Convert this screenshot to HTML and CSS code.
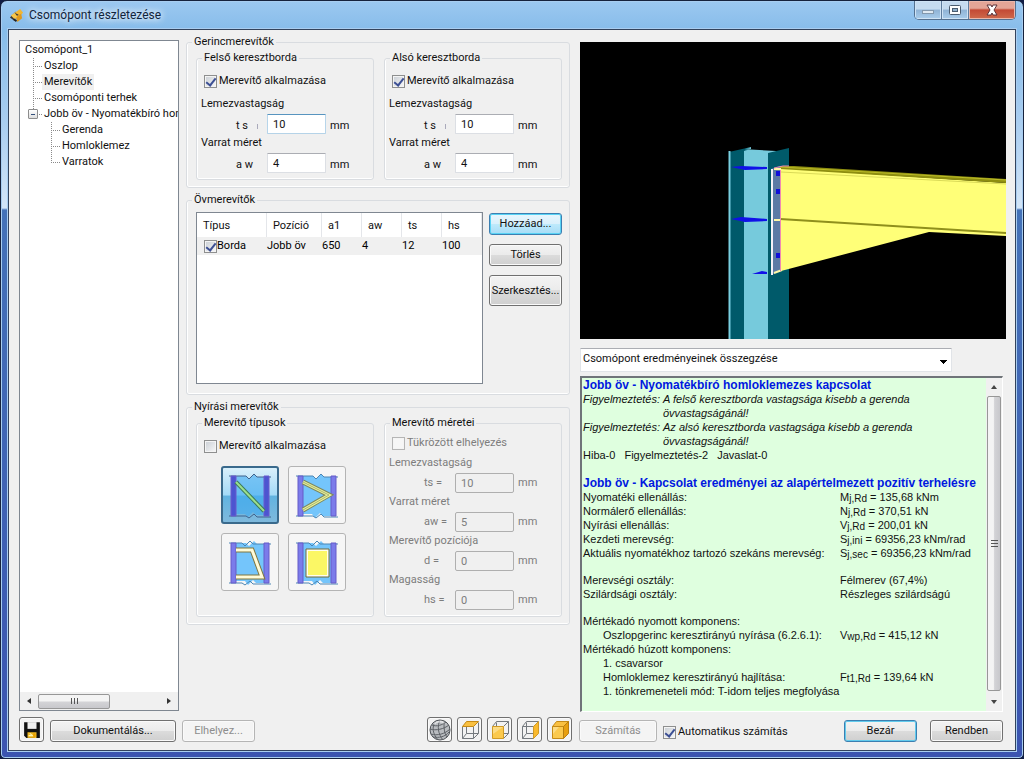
FILE: index.html
```html
<!DOCTYPE html>
<html lang="hu">
<head>
<meta charset="utf-8">
<title>Csomópont részletezése</title>
<link rel="stylesheet" href="styles.css">
</head>
<body>
<div class="window">
  <header class="titlebar">
    <svg class="app-icon" viewBox="0 0 16 16" aria-hidden="true">
      <path d="M1 10 7 4l4 2-6 7z" fill="#3b3733"/><path d="M6 5 12 1l3 4-3 3z" fill="#f2b632"/><path d="M7 9l6-3 1 5-5 4z" fill="#e0991c"/><path d="M2 8l4-3 3 4-3 3z" fill="#f7c64a"/><path d="M5 12l3 2" stroke="#222" stroke-width="2"/>
    </svg>
    <h1 class="title">Csomópont részletezése</h1>
    <div class="caption-buttons">
      <button class="caption" type="button" aria-label="Kis méret"><svg viewBox="0 0 14 12"><rect x="1.500" y="6.500" width="11" height="3" fill="#dfe9f2" stroke="#8398ad"/></svg></button>
      <button class="caption" type="button" aria-label="Teljes méret"><svg viewBox="0 0 14 12"><rect x="1.500" y="1.500" width="11" height="9" rx="1" fill="#fff" stroke="#4c5d70"/><rect x="4.500" y="4.500" width="5" height="3" fill="#8fb0cc" stroke="#4c5d70"/></svg></button>
      <button class="caption close" type="button" aria-label="Bezárás"><svg viewBox="0 0 14 12"><path d="M2 1h4l1 2 1-2h4L9 6l3 5H8L7 9l-1 2H2l3-5z" fill="#fff" stroke="#5c3238"/></svg></button>
    </div>
  </header>

  <main class="client">
    <div class="columns">
      <nav class="tree-panel" aria-label="Csomópont felépítése">
        <div class="tree">
          <span class="node">Csomópont_1</span>
          <ul class="branch">
            <li><div class="item"><i class="twig"></i><span class="node">Oszlop</span></div></li>
            <li><div class="item"><i class="twig"></i><span class="node selected">Merevítők</span></div></li>
            <li><div class="item"><i class="twig"></i><span class="node">Csomóponti terhek</span></div></li>
            <li>
              <div class="item"><i class="twig last"><button class="expander" type="button" aria-label="Összecsukás" aria-expanded="true"></button></i><span class="node">Jobb öv - Nyomatékbíró homloklemezes kapcsolat</span></div>
              <ul class="branch nested">
                <li><div class="item"><i class="twig"></i><span class="node">Gerenda</span></div></li>
                <li><div class="item"><i class="twig"></i><span class="node">Homloklemez</span></div></li>
                <li><div class="item"><i class="twig last"></i><span class="node">Varratok</span></div></li>
              </ul>
            </li>
          </ul>
        </div>
        <div class="hscroll" aria-hidden="true"><i class="arrow left"></i><span class="thumb"><i></i><i></i><i></i></span><i class="arrow right"></i></div>
      </nav>

      <div class="settings">
        <fieldset class="group">
          <legend>Gerincmerevítők</legend>
          <div class="pair">
            <fieldset class="group inner">
              <legend>Felső keresztborda</legend>
              <label class="check"><input type="checkbox" checked>Merevítő alkalmazása</label>
              <p class="caption-text">Lemezvastagság</p>
              <div class="field"><label for="f-ts">t s</label><i class="tick"></i><input class="active" id="f-ts" type="text" value="10"><span>mm</span></div>
              <p class="caption-text tight">Varrat méret</p>
              <div class="field"><label for="f-aw">a w</label><input id="f-aw" type="text" value="4"><span>mm</span></div>
            </fieldset>
            <fieldset class="group inner">
              <legend>Alsó keresztborda</legend>
              <label class="check"><input type="checkbox" checked>Merevítő alkalmazása</label>
              <p class="caption-text">Lemezvastagság</p>
              <div class="field"><label for="a-ts">t s</label><i class="tick"></i><input id="a-ts" type="text" value="10"><span>mm</span></div>
              <p class="caption-text tight">Varrat méret</p>
              <div class="field"><label for="a-aw">a w</label><input id="a-aw" type="text" value="4"><span>mm</span></div>
            </fieldset>
          </div>
        </fieldset>

        <fieldset class="group">
          <legend>Övmerevítők</legend>
          <div class="list-row">
            <div class="list">
              <table>
                <thead><tr><th class="c-type">Típus</th><th class="c-pos">Pozíció</th><th>a1</th><th>aw</th><th>ts</th><th>hs</th><th class="c-rest"></th></tr></thead>
                <tbody><tr><td><label class="check cell"><input type="checkbox" checked>Borda</label></td><td>Jobb öv</td><td>650</td><td>4</td><td>12</td><td>100</td><td></td></tr></tbody>
              </table>
            </div>
            <div class="list-buttons">
              <button class="btn hot" type="button">Hozzáad...</button>
              <button class="btn" type="button">Törlés</button>
              <button class="btn tall" type="button">Szerkesztés...</button>
            </div>
          </div>
        </fieldset>

        <fieldset class="group">
          <legend>Nyírási merevítők</legend>
          <div class="pair">
            <fieldset class="group inner">
              <legend>Merevítő típusok</legend>
              <label class="check">
                <input type="checkbox">Merevítő alkalmazása</label>
              <div class="types">
                <button class="type on" type="button" aria-label="Átlós merevítő" aria-pressed="true">
                  <svg viewBox="0 0 44 48"><path d="M5 5h13l3 3 5-5 3 3h10v38H28l-3-3-5 5-3-3H5z" fill="#3faaf0" opacity=".6"/><path d="M1 5h17l3 3 5-5 3 3h14M1 45h17l3 2 5-4 3 3h14" fill="none" stroke="#41638c"/><path d="M3 5h5v40H3zM36 5h5v40h-5z" fill="#4c55d0" stroke="#6a5acd"/><path d="M8 11l28 29" stroke="#3c7a58" stroke-width="4"/><path d="M8 11l28 29" stroke="#9be08e" stroke-width="2"/></svg>
                </button>
                <button class="type" type="button" aria-label="K merevítő">
                  <svg viewBox="0 0 44 48"><path d="M5 5h13l3 3 5-5 3 3h10v39H28l-3-3-5 5-3-4H5z" fill="#74c5fb"/><path d="M1 5h17l3 3 5-5 3 3h14M1 45h17l3 2 5-4 3 3h14" fill="none" stroke="#4c86b4"/><path d="M3 5h5v40H3zM36 5h5v40h-5z" fill="#7b7bea" stroke="#665cc8"/><path d="M8 11l26 13L8 39" fill="none" stroke="#7c8860" stroke-width="5"/><path d="M8 11l26 13L8 39" fill="none" stroke="#eaf29a" stroke-width="3"/><path d="M8 11l26 13L8 39" fill="none" stroke="#a9b474"/></svg>
                </button>
                <button class="type" type="button" aria-label="Trapéz merevítő">
                  <svg viewBox="0 0 44 48"><path d="M5 5h13l3 3 5-5 3 3h10v39H28l-3-3-5 5-3-4H5z" fill="#74c5fb"/><path d="M1 5h13l3 3 5-5 3 3h18M1 45h13l3 2 5-4 3 3h18" fill="none" stroke="#4c86b4"/><path d="M3 5h5v40H3zM36 5h5v40h-5z" fill="#7b7bea" stroke="#665cc8"/><path d="M8 12h16l10 27H8" fill="none" stroke="#80763f" stroke-width="5"/><path d="M8 12h16l10 27H8" fill="none" stroke="#fffbd8" stroke-width="3"/></svg>
                </button>
                <button class="type" type="button" aria-label="Lemezes merevítő">
                  <svg viewBox="0 0 44 48"><path d="M5 5h13l3 3 5-5 3 3h10v39H28l-3-3-5 5-3-4H5z" fill="#74c5fb"/><path d="M1 5h13l3 3 5-5 3 3h18M1 45h13l3 2 5-4 3 3h18" fill="none" stroke="#4c86b4"/><path d="M3 5h5v40H3zM36 5h5v40h-5z" fill="#7b7bea" stroke="#665cc8"/><path d="M11 11h23v28H11z" fill="#fffef0" stroke="#6f6a3c"/><path d="M13 13h19v24H13z" fill="#fbf765"/></svg>
                </button>
              </div>
            </fieldset>
            <fieldset class="group inner off" disabled>
              <legend>Merevítő méretei</legend>
              <label class="check"><input type="checkbox">Tükrözött elhelyezés</label>
              <p class="caption-text">Lemezvastagság</p>
              <div class="field"><label for="n-ts">ts =</label><input id="n-ts" type="text" value="10"><span>mm</span></div>
              <p class="caption-text">Varrat méret</p>
              <div class="field"><label for="n-aw">aw =</label><input id="n-aw" type="text" value="5"><span>mm</span></div>
              <p class="caption-text">Merevítő pozíciója</p>
              <div class="field"><label for="n-d">d =</label><input id="n-d" type="text" value="0"><span>mm</span></div>
              <p class="caption-text">Magasság</p>
              <div class="field"><label for="n-hs">hs =</label><input id="n-hs" type="text" value="0"><span>mm</span></div>
            </fieldset>
          </div>
        </fieldset>
      </div>

      <div class="output">
        <svg class="model" viewBox="580 42 426 297" preserveAspectRatio="xMaxYMid slice" role="img" aria-label="Oszlop-gerenda csomópont modellje">
          <rect x="380" y="-58" width="826" height="497"/>
          <defs><linearGradient id="web"><stop offset="0" stop-color="#00596a"/><stop offset=".7" stop-color="#005a6a"/><stop offset="1" stop-color="#78c9db"/></linearGradient></defs>
          <path d="M742 149l34 2v188h-34z" fill="#76cadc"/>
          <path d="M729 152l22-5v2l-7 2v188h-15z" fill="url(#web)"/>
          <path d="M729.500 151v188" stroke="#79cfe0" stroke-width="2"/>
          <path d="M768 153l21-5v191h-21z" fill="#005a6a"/>
          <path d="M731 167l10-1 26 1v2l-22 1zM731 219l10-2 26 2v2l-22 1zM752 274l10-3 5 1v2z" fill="#1010e8"/>
          <path d="M771 169l9-3h8l-7 4v99l-9 6z" fill="#5b7aa5"/>
          <path d="M772 169v106" stroke="#f4f1f8" stroke-width="2" fill="none"/>
          <path d="M776 171h4v5h-4zM776 189h4v5h-4zM776 253h4v5h-4z" fill="#1010d8"/>
          <path d="M781 168l225 15v53l-77-4-148 39z" fill="#ffff78"/>
          <path d="M780 166l14 0 212 13v4l-226-14z" fill="#8d8d10"/>
          <path d="M780 167l226 13" stroke="#bcbc28"/>
          <path d="M781 172l225 12" stroke="#dada58" fill="none"/>
          <path d="M780 219l226 14" stroke="#8f8f1c" stroke-width="2"/>
          <path d="M774 169h7M774 220h6M774 273l8-3" stroke="#fff8a8" stroke-width="2"/>
          <path d="M780.500 170v101M774 168l9-2h6" stroke="#f08ab0" fill="none"/>
        </svg>

        <div class="combo"><select aria-label="Eredmények nézete"><option>Csomópont eredményeinek összegzése</option></select></div>

        <section class="report" aria-label="Eredmények" tabindex="0">
          <div class="report-text">
            <h2>Jobb öv - Nyomatékbíró homloklemezes kapcsolat</h2>
            <div class="warning"><span>Figyelmeztetés:</span><span>A felső keresztborda vastagsága kisebb a gerenda övvastagságánál!</span></div>
            <div class="warning"><span>Figyelmeztetés:</span><span>Az alsó keresztborda vastagsága kisebb a gerenda övvastagságánál!</span></div>
            <div class="counts"><span>Hiba-0</span><span>Figyelmeztetés-2</span><span>Javaslat-0</span></div>
            <h2 class="spaced">Jobb öv - Kapcsolat eredményei az alapértelmezett pozitív terhelésre</h2>
            <table class="results">
              <tbody>
                <tr><th scope="row">Nyomatéki ellenállás:</th><td>M<sub>j,Rd</sub> = 135,68 kNm</td></tr>
                <tr><th scope="row">Normálerő ellenállás:</th><td>N<sub>j,Rd</sub> = 370,51 kN</td></tr>
                <tr><th scope="row">Nyírási ellenállás:</th><td>V<sub>j,Rd</sub> = 200,01 kN</td></tr>
                <tr><th scope="row">Kezdeti merevség:</th><td>S<sub>j,ini</sub> = 69356,23 kNm/rad</td></tr>
                <tr><th scope="row">Aktuális nyomatékhoz tartozó szekáns merevség:</th><td>S<sub>j,sec</sub> = 69356,23 kNm/rad</td></tr>
              </tbody>
              <tbody>
                <tr class="spaced"><th scope="row">Merevségi osztály:</th><td>Félmerev (67,4%)</td></tr>
                <tr><th scope="row">Szilárdsági osztály:</th><td>Részleges szilárdságú</td></tr>
              </tbody>
              <tbody>
                <tr class="spaced"><th scope="row">Mértékadó nyomott komponens:</th><td></td></tr>
                <tr class="sub"><th scope="row">Oszlopgerinc keresztirányú nyírása (6.2.6.1):</th><td>V<sub>wp,Rd</sub> = 415,12 kN</td></tr>
                <tr><th scope="row">Mértékadó húzott komponens:</th><td></td></tr>
                <tr class="sub"><th scope="row">1. csavarsor</th><td></td></tr>
                <tr class="sub"><th scope="row">Homloklemez keresztirányú hajlítása:</th><td>F<sub>t1,Rd</sub> = 139,64 kN</td></tr>
                <tr class="sub"><th scope="row">1. tönkremeneteli mód: T-idom teljes megfolyása</th><td></td></tr>
              </tbody>
            </table>
          </div>
          <div class="vscroll" aria-hidden="true"><i class="arrow up"></i><span class="thumb"><i></i><i></i><i></i></span><i class="arrow down"></i></div>
        </section>
      </div>
    </div>

    <footer class="actions">
      <div class="left-actions">
        <button class="btn icon" type="button" aria-label="Mentés"><svg viewBox="0 0 16 16"><path d="M1 1h14v14H3l-2-2z" fill="#111"/><path d="M4 1h8v6H4z" fill="#eee"/><path d="M4 10h8v5H4z" fill="#f0b820"/><path d="M6 11l5 4M5 13h3" stroke="#fff4b0"/><path d="M9 11h2v4H9z" fill="#e9a000"/></svg></button>
        <button class="btn document" type="button">Dokumentálás...</button>
        <button class="btn small" type="button" disabled>Elhelyez...</button>
      </div>
      <div class="views">
        <button class="btn icon" type="button" aria-label="Drótváz"><svg viewBox="0 0 22 22"><circle cx="11" cy="11" r="10" fill="#b9bcc0" stroke="#4e5257"/><path d="M7 2c-5 6-3 13 2 19M11 1c-3 6-2 14 3 20M15 2c0 7 0 12 3 16M1 10c6 2 14 0 19-4M2 15c6 2 14 0 19-5M4 18c6 1 12 0 16-5M3 6c5 2 10 0 14-3" fill="none" stroke="#5d6166"/><path d="M5 5c3-3 8-3 10-1" stroke="#fff" fill="none" stroke-width="2" opacity=".6"/></svg></button>
        <button class="btn icon" type="button" aria-label="Felülnézet"><svg viewBox="0 0 22 22"><path d="M3.500 7.500v12h11v-12M7.500 3.500v11h12v-11M3.500 19.500l4-5M14.500 19.500l5-5" fill="none" stroke="#74797e"/><path d="M3.500 7.500l4-5h12l-5 5z" fill="#f9c041" stroke="#c58a16"/></svg></button>
        <button class="btn icon" type="button" aria-label="Elölnézet"><svg viewBox="0 0 22 22"><path d="M3.500 7.500l4-5h12v12l-5 5M14.500 7.500l5-5M14.500 14.500h5M7.500 3.500v4" fill="none" stroke="#74797e"/><path d="M3.500 7.500h11v12h-11z" fill="#fbc94d" stroke="#d09a26"/><path d="M4 8h10L4 15z" fill="#fddc83"/></svg></button>
        <button class="btn icon" type="button" aria-label="Oldalnézet"><svg viewBox="0 0 22 22"><path d="M3.500 7.500h11v12h-11zM3.500 7.500l4-5h12M7.500 3.500v11h7M3.500 19.500l4-5" fill="none" stroke="#74797e"/><path d="M14.500 7.500l5-5v12l-5 5z" fill="#f9b92d" stroke="#d09a26"/></svg></button>
        <button class="btn icon" type="button" aria-label="Térbeli nézet"><svg viewBox="0 0 22 22"><path d="M3.500 7.500h11v12h-11z" fill="#fbc94d" stroke="#c58a16"/><path d="M3.500 7.500l4-5h12l-5 5z" fill="#f9c041" stroke="#c58a16"/><path d="M14.500 7.500l5-5v12l-5 5z" fill="#e79f10" stroke="#b87e10"/><path d="M4 8h6l-6 7z" fill="#fddc83"/></svg></button>
      </div>
      <div class="right-actions">
        <button class="btn calc" type="button" disabled>Számítás</button>
        <label class="check"><input type="checkbox" checked>Automatikus számítás</label>
        <button class="btn small default" type="button">Bezár</button>
        <button class="btn small" type="button">Rendben</button>
      </div>
    </footer>
  </main>
</div>
</body>
</html>
```

FILE: styles.css
```css
* { box-sizing: border-box; }

body {
  margin: 0;
  background: #101c44;
  color: #111;
  font: 11px/14px Roboto, "Noto Sans", sans-serif;
}

button, input, select { margin: 0; font: inherit; color: inherit; }

p, h1, h2, ul { margin: 0; padding: 0; }

/* Window frame */
.window {
  display: flex;
  flex-direction: column;
  min-height: 100vh;
  padding: 0 7px 7px;
  border: 1px solid #16223c;
  border-radius: 7px 7px 5px 5px;
  background: linear-gradient(to bottom, #9cc8f0 0, #86bcea 30px, #a9cdf0 120px, #d3e5f7 207px, #4472b8 209px, #3b54b0 100%);
  box-shadow: inset 0 0 0 1px #a8cdf0;
}

.titlebar {
  display: flex;
  align-items: center;
  height: 28px;
  padding-left: 1px;
}

.app-icon { width: 15px; height: 15px; }

.title {
  flex: 1;
  margin-left: 5px;
  color: #10243c;
  font: 12px/16px Roboto, "Noto Sans", sans-serif;
  text-shadow: 0 0 6px #fff, 0 0 8px #fff;
}

.caption-buttons {
  display: flex;
  align-self: flex-start;
  overflow: hidden;
  border: 1px solid #54708f;
  border-top: 0;
  border-radius: 0 0 5px 5px;
}

.caption {
  display: grid;
  place-items: center;
  width: 27px;
  height: 18px;
  padding: 0;
  border: 0;
  border-right: 1px solid #5f7d9e;
  background: linear-gradient(#c5dbf0 0 45%, #90b3d5 50%, #a9cdec);
  box-shadow: inset 0 0 0 1px #cfe3f5;
}

.caption svg { width: 14px; height: 12px; }

.caption.close {
  width: 46px;
  border-right: 0;
  background: linear-gradient(#e3a597 0 40%, #c34a35 50%, #cf6a4c);
  box-shadow: inset 0 0 0 1px #e9b6aa;
}

.client {
  display: flex;
  flex: 1;
  flex-direction: column;
  gap: 5px;
  padding: 5px 9px 8px 10px;
  border: 1px solid #33435c;
  outline: 1px solid #a9cdf0;
  background: #f0f0f0;
}

.columns {
  display: grid;
  flex: 1;
  grid-template-columns: 160px 384px minmax(0, 1fr);
  gap: 0 7px;
}

/* Tree */
.tree-panel {
  display: flex;
  flex-direction: column;
  margin-top: 5px;
  margin-bottom: 1px;
  border: 1px solid #7f8791;
  background: #fff;
}

.tree {
  flex: 1;
  padding: 1px 0 0 3px;
  overflow: hidden;
  line-height: 16px;
  white-space: nowrap;
}

.node { padding: 0 2px; }
.selected { background: #f0f0f0; }
.branch { padding-left: 5px; list-style: none; }
.nested { padding-left: 18px; }
.item { display: flex; }

.twig {
  display: flex;
  flex: 0 0 14px;
  align-items: center;
  height: 16px;
  background:
    repeating-linear-gradient(to bottom, #8a8a8a 0 1px, transparent 1px 2px) 5px 0 / 1px 16px no-repeat,
    repeating-linear-gradient(to right, #8a8a8a 0 1px, transparent 1px 2px) 5px 8px / 9px 1px no-repeat;
}

.twig.last { background-size: 1px 9px, 9px 1px; }

.expander {
  width: 10px;
  height: 10px;
  padding: 0;
  border: 1px solid #8d8d8d;
  border-radius: 1px;
  background: linear-gradient(#33507c, #33507c) center / 4px 1px no-repeat, linear-gradient(#fff, #ddd);
}

.hscroll {
  display: flex;
  align-items: center;
  height: 18px;
  padding: 1px 7px;
  background: #f0f0f0;
}

.thumb {
  display: flex;
  align-items: center;
  justify-content: center;
  gap: 2px;
  border: 1px solid #979797;
  border-radius: 2px;
}

.hscroll .thumb { width: 72px; height: 15px; margin: 0 auto 0 7px; background: linear-gradient(#f4f4f4 45%, #d3d3d6 55%, #c8c8cc); }
.hscroll .thumb i { width: 1px; height: 6px; background: #555; }

.arrow { border: 3px solid transparent; }
.arrow.left { border-right: 4px solid #333; border-left: 0; }
.arrow.right { border-left: 4px solid #333; border-right: 0; }
.arrow.up { border-bottom: 4px solid #444; border-top: 0; }
.arrow.down { border-top: 4px solid #444; border-bottom: 0; }

/* Group boxes */
.settings { display: flex; flex-direction: column; gap: 5px; }

.group {
  min-width: 0;
  margin: 0;
  padding: 2px 7px 7px 9px;
  border: 1px solid #d9dce0;
  border-radius: 3px;
  box-shadow: inset 0 -1px #fff, inset 1px 0 #fff;
}

.group > legend { margin-left: -4px; padding: 0 2px; }
.pair { display: grid; grid-template-columns: 1fr 1fr; gap: 10px; }
.inner { padding: 8px 5px 6px 4px; }
.inner > legend { margin-left: 1px; }

.check { display: flex; align-items: center; gap: 2px; height: 16px; padding-left: 3px; }

.check input {
  appearance: none;
  width: 13px;
  height: 13px;
  border: 1px solid #8e8f8f;
  background: linear-gradient(135deg, #c9ced4, #f8f8f8);
  box-shadow: inset 0 0 0 1px #f4f4f4;
}

.check input:checked {
  display: grid;
  place-items: center;
}

.check input:checked::before {
  width: 4px;
  height: 8px;
  border: solid #3c4f94;
  border-width: 0 2px 2px 0;
  content: "";
  transform: rotate(38deg);
}

.caption-text { margin-top: 7px; line-height: 16px; }
.caption-text + .field { margin-top: 2px; }
.caption-text.tight { margin-top: 1px; }

.field { display: flex; align-items: center; padding-left: 35px; }
.field label { flex: 0 0 31px; padding-top: 4px; }
.field span { padding: 4px 0 0 4px; }
.field .tick { width: 1px; height: 5px; margin: 4px 9px 0 -10px; background: #aab; }

.field input {
  width: 59px;
  height: 20px;
  padding: 0 5px;
  border: 1px solid #dcdfe4;
  border-top-color: #abadb3;
  border-radius: 1px;
  background: #fff;
}

.field input.active { border-color: #5794bf #b7d5ea #b5d3e8 #b7d5ea; }

.off { padding-top: 5px; padding-bottom: 4px; }
.off .check, .off .field, .off .caption-text { color: #7d7d7d; }
.off .check input { border-color: #b5b5b5; background: #f6f6f6; }
.off .caption-text { margin-top: 1px; }
.off .check + .caption-text { margin-top: 4px; }
.off .field input { border-color: #afafaf; border-radius: 2px; background: #f0f0f0; }
.off .field label, .off .field span { padding-top: 0; }

/* Stiffener list */
.list-row { display: flex; gap: 6px; padding: 3px 0 3px; }
.list { flex: 1; height: 172px; border: 1px solid #7f8791; background: #fff; }
.list table { width: 100%; border-spacing: 0; table-layout: fixed; }
.list th { height: 24px; padding: 2px 0 0 6px; border-right: 1px solid #e4e6ea; font-weight: 400; text-align: left; }
.list td { height: 18px; padding: 0; background: #f0f0f0; color: #000; }
.list th:last-child { border: 0; }
.list tr > * { width: 40px; }
.list .c-type { width: 70px; }
.list .c-pos { width: 55px; }
.list .c-rest { width: auto; }
.check.cell { gap: 0; padding-left: 7px; }

.list-buttons { display: flex; flex-direction: column; gap: 9px; width: 76px; padding-top: 1px; }

.btn {
  height: 22px;
  padding: 0;
  border: 1px solid #707070;
  border-radius: 3px;
  background: linear-gradient(#f3f3f3 0, #ebebeb 49%, #dcdcdc 50%, #cfcfcf);
  box-shadow: inset 0 0 0 1px #fafafa;
  white-space: nowrap;
}

.btn.tall { height: 31px; }
.btn.hot { border-color: #3c7fb1; background: linear-gradient(#e8f6fd 0, #d9f0fc 49%, #beeafc 50%, #a7dcf6); box-shadow: inset 0 0 0 1px #58d3f5; }
.btn.default { border-color: #3c7fb1; box-shadow: inset 0 0 0 1px #62cbed; }
.btn:disabled { border-color: #b5b5b5; background: #f4f4f4; color: #8d8d8d; }

/* Stiffener types */
.types { display: grid; grid-template-columns: 58px 58px; gap: 9px; padding: 12px 0 19px 20px; }

.type {
  display: grid;
  place-items: center;
  height: 58px;
  padding: 0;
  border: 1px solid #b4b4b4;
  border-radius: 3px;
  background: #f6f6f6;
}

.type svg { width: 44px; height: 48px; }
.type.on { border: 2px solid #3a6a8c; background: linear-gradient(#d9f0fb, #a4daf7 50%, #61b3e0 52%, #7fb9dc); }

/* 3D view and report */
.output { display: flex; flex-direction: column; min-width: 0; padding-left: 3px; }
.model { display: block; width: 100%; height: 297px; margin-top: 7px; background: #000; }
.combo { width: 372px; max-width: 100%; margin: 9px 0 4px; }

.combo select {
  appearance: none;
  width: 100%;
  height: 24px;
  padding: 0 4px 3px 2px;
  border: 1px solid #e1e4e8;
  border-top-color: #abadb3;
  border-radius: 1px;
  background: linear-gradient(#000, #000) right 4px top 11px / 7px 1px no-repeat,
    linear-gradient(#000, #000) right 5px top 12px / 5px 1px no-repeat,
    linear-gradient(#000, #000) right 6px top 13px / 3px 1px no-repeat,
    linear-gradient(#000, #000) right 7px top 14px / 1px 1px no-repeat, #fff;
}

.report {
  display: flex;
  flex: 1;
  margin-right: 3px;
  border: solid #fff;
  border-width: 2px 1px 1px 2px;
  border-top-color: #6f7479;
  border-left-color: #6f7479;
  background: #dfffdf;
}

.report-text {
  flex: 1;
  padding-left: 1px;
  color: #111;
  font: 11px/14px "Liberation Sans", Arial, sans-serif;
  white-space: nowrap;
}

.report-text h2 { color: #0018e0; font-size: 12px; line-height: 14px; }
.report-text h2.spaced { margin-top: 14px; }
.warning { display: flex; font-style: italic; white-space: normal; }
.warning span:first-child { flex: 0 0 80px; }
.warning span:last-child { max-width: 265px; }
.counts { display: flex; gap: 9px; }
.results { width: 100%; border-spacing: 0; table-layout: fixed; }
.results th { width: 257px; padding: 0; font-weight: 400; text-align: left; }
.results td { padding: 0; }
.results .spaced > * { padding-top: 13px; }
.results .sub th { padding-left: 20px; }
.results sub { font-size: 10px; line-height: 0; vertical-align: -1px; }

.vscroll { display: flex; flex: 0 0 16px; flex-direction: column; align-items: center; padding: 7px 0; background: #f0f0f0; }
.vscroll .thumb { flex: 1; flex-direction: column; width: 14px; margin: 7px 0 9px; background: linear-gradient(to right, #f4f4f4 45%, #d3d3d6 55%, #c8c8cc); }
.vscroll .thumb i { width: 7px; height: 1px; background: #555; }

/* Footer */
.actions { display: grid; grid-template-columns: 408px 152px minmax(0, 1fr); align-items: end; }
.left-actions, .views, .right-actions { display: flex; align-items: flex-end; }
.left-actions { gap: 6px; }
.views { gap: 5px; }
.right-actions { padding-right: 3px; }

.btn.icon { display: grid; place-items: center; width: 25px; height: 25px; background: #f2f2f2; }
.btn.icon svg { width: 18px; height: 18px; }
.views .btn.icon svg { width: 22px; height: 22px; }
.document { width: 126px; }
.small { width: 73px; }
.calc { width: 78px; }
.right-actions .check { flex: 1; height: 20px; padding-left: 6px; }
.right-actions .small + .small { margin-left: 13px; }
```
